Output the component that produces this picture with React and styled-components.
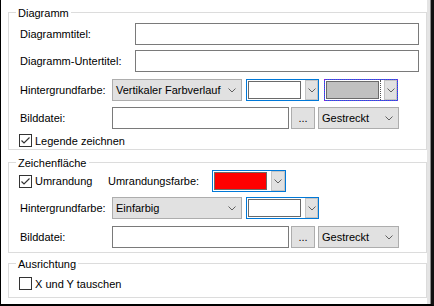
import React from 'react'
import styled, { createGlobalStyle, css } from 'styled-components'

const GlobalStyle = createGlobalStyle`
  html, body {
    margin: 0;
    padding: 0;
    background: #fff;
  }
  body {
    font-family: "Liberation Sans", Arial, sans-serif;
    font-size: 11px;
    color: #000;
  }
`

const Window = styled.div`
  box-sizing: border-box;
  width: 434px;
  height: 306px;
  background: #fff;
  border-left: 1px solid #000;
  border-right: 3px solid #111;
  border-bottom: 2px solid #000;
  box-shadow: inset -1px 0 0 #8c8c8c, inset -4px 0 0 #e4e4e4;
  padding-left: 7px;
  overflow: hidden;
`

const Group = styled.section`
  box-sizing: border-box;
  width: 419px;
  margin-top: ${p => p.$mt}px;
  border: 1px solid #dcdcdc;
  padding: 0 0 ${p => p.$pb}px 10px;
`

const GroupTitle = styled.div`
  width: fit-content;
  height: 14px;
  line-height: 14px;
  margin: -7px 0 0 -3px;
  padding: 0 2px;
  background: #fff;
`

const Row = styled.div`
  display: flex;
  align-items: center;
  height: ${p => p.$h || 22}px;
  margin-top: ${p => p.$mt || 0}px;
`

const Label = styled.span`
  flex: none;
  width: ${p => p.$w}px;
  padding-left: 1px;
  box-sizing: border-box;
  white-space: nowrap;
`

const TextBox = styled.div`
  box-sizing: border-box;
  flex: none;
  width: ${p => p.$w}px;
  height: 22px;
  margin-left: ${p => p.$ml || 0}px;
  background: #fff;
  border: 1px solid #7a7a7a;
`

const Select = styled.div`
  box-sizing: border-box;
  flex: none;
  display: flex;
  align-items: center;
  justify-content: space-between;
  width: ${p => p.$w}px;
  height: 22px;
  margin-left: ${p => p.$ml || 0}px;
  padding: 0 5px 0 3px;
  background: #e1e1e1;
  border: 1px solid #adadad;
  white-space: nowrap;
`

const DotsButton = styled.div`
  box-sizing: border-box;
  flex: none;
  display: flex;
  align-items: flex-end;
  justify-content: center;
  width: ${p => p.$w}px;
  height: 22px;
  margin-left: ${p => p.$ml || 0}px;
  padding-bottom: 4px;
  background: #e1e1e1;
  border: 1px solid #adadad;
`

const Combo = styled.div`
  box-sizing: border-box;
  flex: none;
  display: flex;
  align-items: center;
  width: ${p => p.$w}px;
  height: 22px;
  margin-left: ${p => p.$ml || 0}px;
  padding-left: 1px;
  border: 1px solid #0078d7;
  ${p => p.$focus && css`
    outline: 1px dotted #8a1fe0;
    outline-offset: -1px;
  `}
`

const Swatch = styled.div`
  box-sizing: border-box;
  flex: none;
  width: 53px;
  height: 18px;
  background: ${p => p.$color};
  border: 1px solid #6a6a6a;
`

const FocusLine = styled.div`
  flex: none;
  width: 0;
  height: 20px;
  margin: 0 3px 0 1px;
  border-left: 1px dotted #555;
`

const DropButton = styled.div`
  box-sizing: border-box;
  flex: 1;
  display: flex;
  align-items: center;
  justify-content: center;
  height: 20px;
  margin-left: ${p => (p.$focus ? 0 : 4)}px;
  background: #e1e1e1;
  border: 1px solid #c4c4c4;
`

const CheckRow = styled.label`
  display: flex;
  align-items: center;
  width: ${p => (p.$w ? `${p.$w}px` : 'auto')};
  flex: none;
  height: 13px;
  gap: 3px;
  white-space: nowrap;
`

const Box = styled.span`
  box-sizing: border-box;
  flex: none;
  display: flex;
  align-items: center;
  justify-content: center;
  width: 13px;
  height: 13px;
  background: #fff;
  border: 1px solid #333;
`

const Chevron = () => (
  <svg width="8" height="5" viewBox="0 0 8 5">
    <polyline points="0.5,0.5 4,4 7.5,0.5" fill="none" stroke="#606060" strokeWidth="1" />
  </svg>
)

const Check = ({ checked }) => (
  <Box>
    {checked && (
      <svg width="11" height="11" viewBox="0 0 11 11">
        <polyline points="1.5,5.5 4,8 9.5,2.5" fill="none" stroke="#333" strokeWidth="1.2" />
      </svg>
    )}
  </Box>
)

const ColorPicker = ({ w, ml, color, focus }) => (
  <Combo $w={w} $ml={ml} $focus={focus}>
    <Swatch $color={color} />
    {focus && <FocusLine />}
    <DropButton $focus={focus}>
      <Chevron />
    </DropButton>
  </Combo>
)

const ImageRow = ({ mt }) => (
  <Row $mt={mt}>
    <Label $w={93}>Bilddatei:</Label>
    <TextBox $w={177} />
    <DotsButton $w={24} $ml={2}>...</DotsButton>
    <Select $w={81} $ml={3}>
      Gestreckt
      <Chevron />
    </Select>
  </Row>
)

export default function App() {
  return (
    <>
      <GlobalStyle />
      <Window>
        <Group $mt={12} $pb={2}>
          <GroupTitle>Diagramm</GroupTitle>
          <Row $mt={3}>
            <Label $w={116}>Diagrammtitel:</Label>
            <TextBox $w={284} />
          </Row>
          <Row $mt={5}>
            <Label $w={116}>Diagramm-Untertitel:</Label>
            <TextBox $w={284} />
          </Row>
          <Row $mt={7}>
            <Label $w={93}>Hintergrundfarbe:</Label>
            <Select $w={130}>
              Vertikaler Farbverlauf
              <Chevron />
            </Select>
            <ColorPicker w={73} ml={4} color="#fff" />
            <ColorPicker w={74} ml={5} color="#c0c0c0" focus />
          </Row>
          <ImageRow mt={6} />
          <Row $mt={5} $h={13}>
            <CheckRow>
              <Check checked />
              Legende zeichnen
            </CheckRow>
          </Row>
        </Group>

        <Group $mt={12} $pb={4}>
          <GroupTitle>Zeichenfläche</GroupTitle>
          <Row>
            <CheckRow $w={88}>
              <Check checked />
              Umrandung
            </CheckRow>
            <Label $w={105}>Umrandungsfarbe:</Label>
            <ColorPicker w={74} color="#ff0000" />
          </Row>
          <Row $mt={5}>
            <Label $w={93}>Hintergrundfarbe:</Label>
            <Select $w={130}>
              Einfarbig
              <Chevron />
            </Select>
            <ColorPicker w={73} ml={4} color="#fff" />
          </Row>
          <ImageRow mt={7} />
        </Group>

        <Group $mt={10} $pb={7}>
          <GroupTitle>Ausrichtung</GroupTitle>
          <Row $mt={6} $h={13}>
            <CheckRow>
              <Check />
              X und Y tauschen
            </CheckRow>
          </Row>
        </Group>
      </Window>
    </>
  )
}
